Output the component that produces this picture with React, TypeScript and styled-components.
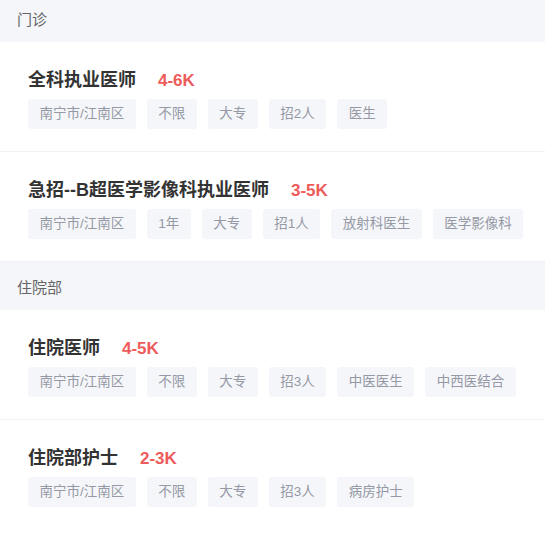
import styled, { createGlobalStyle } from "styled-components";

const GlobalStyle = createGlobalStyle`
  html, body {
    margin: 0;
    padding: 0;
    background: #fff;
  }
  body {
    font-family: "Liberation Sans", "Noto Sans CJK SC", sans-serif;
    overflow: hidden;
  }
`;

const Page = styled.div`
  width: 545px;
  margin-top: -6px;
  display: flex;
  flex-direction: column;
`;

const SectionHeader = styled.div`
  height: 48px;
  display: flex;
  align-items: center;
  padding-left: 17px;
  background: #f5f6f9;
  color: #666;
  font-size: 15px;
`;

const Card = styled.div<{ $last?: boolean }>`
  padding: 25px 12px 22px 28px;
  background: #fff;
  border-bottom: 1px solid ${(p) => (p.$last ? "transparent" : "#f0f1f3")};
`;

const TitleRow = styled.div`
  display: flex;
  align-items: baseline;
  height: 26px;
  line-height: 26px;
  margin-bottom: 6px;
`;

const Title = styled.span`
  font-size: 18px;
  font-weight: bold;
  color: #333;
`;

const Salary = styled.span`
  margin-left: 22px;
  font-size: 17px;
  font-weight: bold;
  color: #ee5b5b;
`;

const Tags = styled.div`
  display: flex;
  flex-wrap: wrap;
  gap: 11px;
`;

const Tag = styled.span`
  height: 30px;
  line-height: 30px;
  padding: 0 11.5px;
  border-radius: 3px;
  background: #f5f6f9;
  color: #9499a5;
  font-size: 13.5px;
  white-space: nowrap;
`;

type Job = { title: string; salary: string; tags: string[] };

const sections: { name: string; jobs: Job[] }[] = [
  {
    name: "门诊",
    jobs: [
      { title: "全科执业医师", salary: "4-6K", tags: ["南宁市/江南区", "不限", "大专", "招2人", "医生"] },
      {
        title: "急招--B超医学影像科执业医师",
        salary: "3-5K",
        tags: ["南宁市/江南区", "1年", "大专", "招1人", "放射科医生", "医学影像科"],
      },
    ],
  },
  {
    name: "住院部",
    jobs: [
      { title: "住院医师", salary: "4-5K", tags: ["南宁市/江南区", "不限", "大专", "招3人", "中医医生", "中西医结合"] },
      { title: "住院部护士", salary: "2-3K", tags: ["南宁市/江南区", "不限", "大专", "招3人", "病房护士"] },
    ],
  },
];

export default function App() {
  return (
    <>
      <GlobalStyle />
      <Page>
        {sections.map((s, si) => (
          <div key={s.name}>
            <SectionHeader>{s.name}</SectionHeader>
            {s.jobs.map((j, ji) => (
              <Card key={j.title} $last={si === sections.length - 1 && ji === s.jobs.length - 1}>
                <TitleRow>
                  <Title>{j.title}</Title>
                  <Salary>{j.salary}</Salary>
                </TitleRow>
                <Tags>
                  {j.tags.map((t) => (
                    <Tag key={t}>{t}</Tag>
                  ))}
                </Tags>
              </Card>
            ))}
          </div>
        ))}
      </Page>
    </>
  );
}
